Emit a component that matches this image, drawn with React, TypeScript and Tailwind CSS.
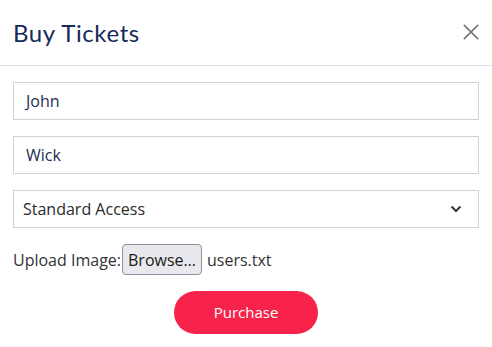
import React from "react";

export default function App() {
  return (
    <div className="w-[492px] h-[347px] bg-white overflow-hidden" style={{ fontFamily: '"Open Sans", sans-serif' }}>
      <div className="h-[66px] border-b border-[#dee2e6] flex items-center justify-between pl-[13px] pr-[13px]">
        <h1 className="text-[24px] leading-none text-[#15295b] tracking-[0.6px] pt-[1px]" style={{ fontFamily: 'Lato, "Noto Sans", sans-serif', fontWeight: 400 }}>
          Buy Tickets
        </h1>
        <svg width="16" height="16" viewBox="0 0 16 16" className="mb-[1px]">
          <path d="M0.8 0.8 L15.2 15.2 M15.2 0.8 L0.8 15.2" stroke="#7a7a7a" strokeWidth="1.7" />
        </svg>
      </div>
      <div className="px-[13px] pt-[16px] flex flex-col gap-[16px]">
        <div className="h-[38px] border border-[#ced4da] flex items-center px-[12px] text-[16px] text-[#1d2d50]">John</div>
        <div className="h-[38px] border border-[#ced4da] flex items-center px-[12px] text-[16px] text-[#1d2d50]">Wick</div>
        <div className="h-[38px] border border-[#ced4da] flex items-center justify-between pl-[9px] pr-[16px] text-[16px] text-[#2b2b2b]">
          <span>Standard Access</span>
          <svg width="12" height="8" viewBox="0 0 12 8">
            <path d="M1.5 1.5 L6 6 L10.5 1.5" stroke="#343a40" strokeWidth="2" fill="none" />
          </svg>
        </div>
        <div className="flex items-center h-[31px] text-[16px] text-[#333]">
          <span>Upload Image:</span>
          <span className="ml-[1px] h-[31px] w-[80px] flex items-center justify-center rounded-[4px] border border-[#8f8f9d] bg-[#e9e9ed] text-[#1a1a1a]">
            Browse…
          </span>
          <span className="ml-[5px]">users.txt</span>
        </div>
        <div className="flex justify-center">
          <button className="w-[144px] h-[43px] rounded-full bg-[#f8234b] text-white text-[15px]">Purchase</button>
        </div>
      </div>
    </div>
  );
}
